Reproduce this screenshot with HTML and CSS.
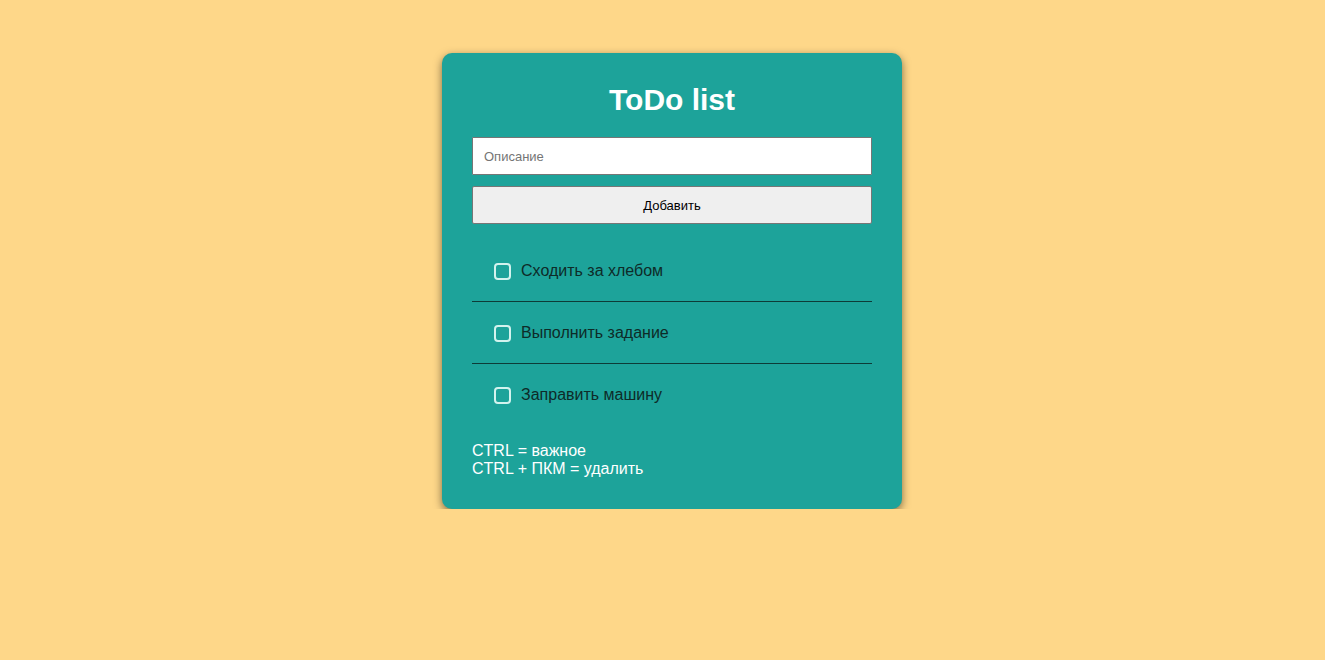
FILE: index.html
```html
<!DOCTYPE html>
<html lang="ru">
<head>
<meta charset="utf-8">
<title>ToDo list</title>
<link rel="stylesheet" href="styles.css">
</head>
<body>
<div class="page">
  <div class="card">
    <h1 class="title">ToDo list</h1>
    <input class="desc" type="text" placeholder="Описание">
    <button class="add">Добавить</button>
    <ul class="list">
      <li class="item"><span class="box"></span><span class="text">Сходить за хлебом</span></li>
      <li class="item"><span class="box"></span><span class="text">Выполнить задание</span></li>
      <li class="item last"><span class="box"></span><span class="text">Заправить машину</span></li>
    </ul>
    <div class="hint">CTRL = важное<br>CTRL + ПКМ = удалить</div>
  </div>
</div>
</body>
</html>
```
FILE: styles.css
```css
html, body {
  margin: 0;
  padding: 0;
  background: #fed789;
  font-family: "Liberation Sans", Arial, sans-serif;
}
.page {
  display: flex;
  justify-content: center;
  align-items: flex-start;
  padding-top: 53px;
  padding-left: 19px;
}
.card {
  width: 400px;
  padding: 30px 30px 31px;
  background: #1da39a;
  border-radius: 10px;
  box-shadow: 0 3px 9px rgba(0, 0, 0, 0.5);
  display: flex;
  flex-direction: column;
}
.title {
  margin: 0 0 21px;
  font-size: 30px;
  line-height: 33px;
  font-weight: bold;
  color: #ffffff;
  text-align: center;
}
.desc {
  box-sizing: border-box;
  width: 400px;
  height: 38px;
  margin: 0;
  padding: 0 11px;
  border: 1px solid #767676;
  border-radius: 1px;
  background: #fff;
  font-family: "Liberation Sans", Arial, sans-serif;
  font-size: 13px;
  color: #000;
  outline: none;
}
.desc::placeholder {
  color: #757575;
}
.add {
  box-sizing: border-box;
  width: 400px;
  height: 38px;
  margin: 11px 0 0;
  border: 1px solid #767676;
  border-radius: 2px;
  background: #efefef;
  font-family: "Liberation Sans", Arial, sans-serif;
  font-size: 13px;
  color: #000;
}
.list {
  list-style: none;
  margin: 16px 0 0;
  padding: 0;
}
.item {
  display: flex;
  align-items: center;
  height: 61px;
  padding-left: 22px;
  border-bottom: 1px solid #0d3b37;
}
.item.last {
  border-bottom: none;
  height: 62px;
}
.box {
  box-sizing: border-box;
  width: 17px;
  height: 17px;
  border: 2px solid #d3f3ee;
  border-radius: 4px;
  margin-right: 10px;
  margin-top: 1px;
}
.text {
  font-size: 16px;
  color: #0e2b28;
}
.hint {
  margin-top: 16px;
  font-size: 16px;
  line-height: 18px;
  color: #ffffff;
}
```
